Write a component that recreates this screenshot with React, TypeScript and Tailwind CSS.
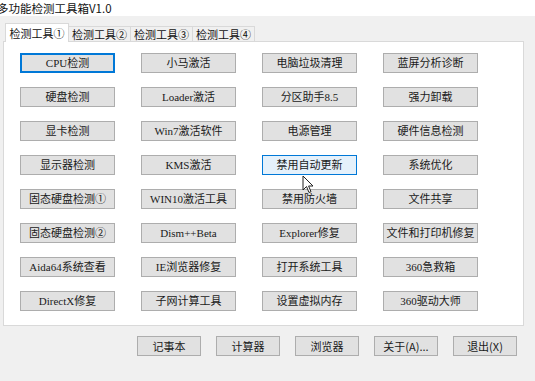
import React from 'react';

const rows: string[][] = [
    ['CPU检测', '小马激活', '电脑垃圾清理', '蓝屏分析诊断'],
    ['硬盘检测', 'Loader激活', '分区助手8.5', '强力卸载'],
    ['显卡检测', 'Win7激活软件', '电源管理', '硬件信息检测'],
    ['显示器检测', 'KMS激活', '禁用自动更新', '系统优化'],
    ['固态硬盘检测①', 'WIN10激活工具', '禁用防火墙', '文件共享'],
    ['固态硬盘检测②', 'Dism++Beta', 'Explorer修复', '文件和打印机修复'],
    ['Aida64系统查看', 'IE浏览器修复', '打开系统工具', '360急救箱'],
    ['DirectX修复', '子网计算工具', '设置虚拟内存', '360驱动大师'],
];

const tabs = ['检测工具①', '检测工具②', '检测工具③', '检测工具④'];
const bottom = ['记事本', '计算器', '浏览器', '关于(A)...', '退出(X)'];

const font = { fontFamily: '"Liberation Serif", "Noto Sans CJK SC", serif' };
const sans = { fontFamily: '"Noto Sans CJK SC", sans-serif' };

const ToolButton: React.FC<{ label: string; state?: 'focus' | 'hover' }> = ({ label, state }) => {
    const cls =
        state === 'focus'
            ? 'border-2 border-[#0078d7] bg-[#e1e1e1]'
            : state === 'hover'
              ? 'border border-[#0078d7] bg-[#e5f1fb]'
              : 'border border-[#adadad] bg-[#e1e1e1]';
    return (
        <div className={`h-[20px] flex items-center justify-center text-[11px] text-[#1a1a1a] whitespace-nowrap ${cls}`}>
            {label}
        </div>
    );
};

export default function App() {
    return (
        <div className="relative w-[535px] h-[381px] bg-[#f0f0f0] overflow-hidden" style={font}>
            {/* Title bar */}
            <div className="h-[16px] bg-white">
                <div className="ml-[-3px] text-[11.5px] leading-[16px] text-[#111] whitespace-nowrap" style={sans}>
                    多功能检测工具箱V1.0
                </div>
            </div>

            {/* Tabs */}
            <div className="flex items-end h-[25px] pl-[5px]">
                {tabs.map((t, i) => (
                    <div
                        key={t}
                        className={`flex items-center justify-center text-[11px] text-[#111] border border-b-0 border-[#d9d9d9] whitespace-nowrap ${
                            i === 0 ? 'w-[64px] h-[19px] bg-white relative top-[1px] z-10' : 'w-[63px] h-[15px] bg-[#f0f0f0] -ml-px'
                        }`}
                        style={sans}
                    >
                        {t}
                    </div>
                ))}
            </div>

            {/* Panel */}
            <div className="ml-[3px] w-[521px] h-[285px] bg-white border border-[#d9d9d9] pt-[11px] pl-[16px]">
                <div className="grid grid-cols-[95px_95px_95px_95px] gap-x-[26px] gap-y-[14px]">
                    {rows.map((r, ri) =>
                        r.map((label, ci) => (
                            <ToolButton
                                key={label}
                                label={label}
                                state={ri === 0 && ci === 0 ? 'focus' : ri === 3 && ci === 2 ? 'hover' : undefined}
                            />
                        ))
                    )}
                </div>
            </div>

            {/* Bottom buttons */}
            <div className="flex justify-end gap-[15px] pr-[18px] mt-[10px]">
                {bottom.map((b) => (
                    <div
                        key={b}
                        className="w-[64px] h-[20px] flex items-center justify-center text-[11px] text-[#1a1a1a] border border-[#adadad] bg-[#e1e1e1] whitespace-nowrap"
                        style={sans}
                    >
                        {b}
                    </div>
                ))}
            </div>

            {/* Mouse cursor */}
            <svg className="absolute left-[302px] top-[175px]" width="12" height="19" viewBox="0 0 12 19">
                <path d="M1 1 L1 15 L4.5 11.5 L7 17.5 L9 16.7 L6.6 11 L11 11 Z" fill="white" stroke="#222" strokeWidth="1" strokeLinejoin="round" />
            </svg>
        </div>
    );
}
